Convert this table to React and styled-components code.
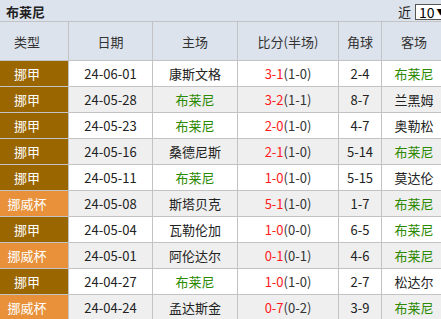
import React from 'react';
import styled, {createGlobalStyle} from 'styled-components';

const GlobalStyle = createGlobalStyle`
html, body {
  margin: 0;
  padding: 0;
  overflow: hidden;
  background: #fff;
}
body {
  font-family: "Noto Sans CJK SC", "Noto Sans", sans-serif;
  font-size: 13px;
  color: #333;
}
`;

const Root = styled.div`
width: 446px;
`;

const TitleBar = styled.div`
width: 458px;
height: 22px;
background: #dde3ec;
border-bottom: 1px solid #c3c3c3;
display: flex;
align-items: center;
justify-content: space-between;
padding-left: 6px;
box-sizing: border-box;
`;

const Title = styled.div`
font-weight: bold;
font-size: 13px;
color: #222;
padding-top: 2px;
`;

const Picker = styled.div`
display: flex;
align-items: center;
gap: 4px;
padding-top: 2px;
color: #222;
`;

const FakeSelect = styled.div`
width: 38px;
height: 14px;
border: 1px solid #555;
background: #fff;
display: flex;
align-items: center;
gap: 2px;
padding: 0 0 0 3px;
font-size: 14px;
line-height: 14px;
color: #000;
`;

const Arrow = styled.span`
font-size: 8px;
`;

const Grid = styled.div`
display: grid;
grid-template-columns: 68px 83px 84px 100px 42px 64px;
grid-template-rows: 38px;
grid-auto-rows: 25px;
gap: 1px;
background: #c3c3c3;
border-bottom: 1px solid #c3c3c3;
`;

const HeadCell = styled.div`
background: #dde3ec;
display: flex;
align-items: center;
justify-content: center;
color: #333;
padding-right: ${p => p.$shift ? '14px' : '0'};
`;

const Cell = styled.div`
background: ${p => p.$even ? '#efefef' : '#fff'};
display: flex;
align-items: center;
justify-content: center;
color: ${p => p.$green ? '#2b8a00' : '#222'};
`;

const TypeCell = styled.div`
background: ${p => p.$cup ? '#e8913a' : '#9a6600'};
color: #fff;
display: flex;
align-items: center;
justify-content: center;
padding-right: 14px;
`;

const Score = styled.span`
color: #ff1a1a;
`;

const Half = styled.span`
color: #333;
`;

const HOME = '布莱尼';

const rows = [
  ['挪甲', '24-06-01', '康斯文格', '3-1', '1-0', '2-4', '布莱尼'],
  ['挪甲', '24-05-28', '布莱尼', '3-2', '1-1', '8-7', '兰黑姆'],
  ['挪甲', '24-05-23', '布莱尼', '2-0', '1-0', '4-7', '奥勒松'],
  ['挪甲', '24-05-16', '桑德尼斯', '2-1', '1-0', '5-14', '布莱尼'],
  ['挪甲', '24-05-11', '布莱尼', '1-0', '1-0', '5-15', '莫达伦'],
  ['挪威杯', '24-05-08', '斯塔贝克', '5-1', '1-0', '1-7', '布莱尼'],
  ['挪甲', '24-05-04', '瓦勒伦加', '1-0', '0-0', '6-5', '布莱尼'],
  ['挪威杯', '24-05-01', '阿伦达尔', '0-1', '0-1', '4-6', '布莱尼'],
  ['挪甲', '24-04-27', '布莱尼', '1-0', '1-0', '2-7', '松达尔'],
  ['挪威杯', '24-04-24', '孟达斯金', '0-7', '0-2', '3-9', '布莱尼'],
];

const headers = ['类型', '日期', '主场', '比分(半场)', '角球', '客场'];

export default function App() {
  return (
    <Root>
      <GlobalStyle/>
      <TitleBar>
        <Title>布莱尼</Title>
        <Picker>
          <span>近</span>
          <FakeSelect>10<Arrow>▼</Arrow></FakeSelect>
        </Picker>
      </TitleBar>
      <Grid>
        {headers.map((h, i) => (
          <HeadCell key={h} $shift={i === 0}>{h}</HeadCell>
        ))}
        {rows.map((r, i) => {
          const even = i % 2 === 1;
          return (
            <React.Fragment key={r[1]}>
              <TypeCell $cup={r[0] === '挪威杯'}>{r[0]}</TypeCell>
              <Cell $even={even}>{r[1]}</Cell>
              <Cell $even={even} $green={r[2] === HOME}>{r[2]}</Cell>
              <Cell $even={even}><Score>{r[3]}</Score><Half>({r[4]})</Half></Cell>
              <Cell $even={even}>{r[5]}</Cell>
              <Cell $even={even} $green={r[6] === HOME}>{r[6]}</Cell>
            </React.Fragment>
          );
        })}
      </Grid>
    </Root>
  );
}
